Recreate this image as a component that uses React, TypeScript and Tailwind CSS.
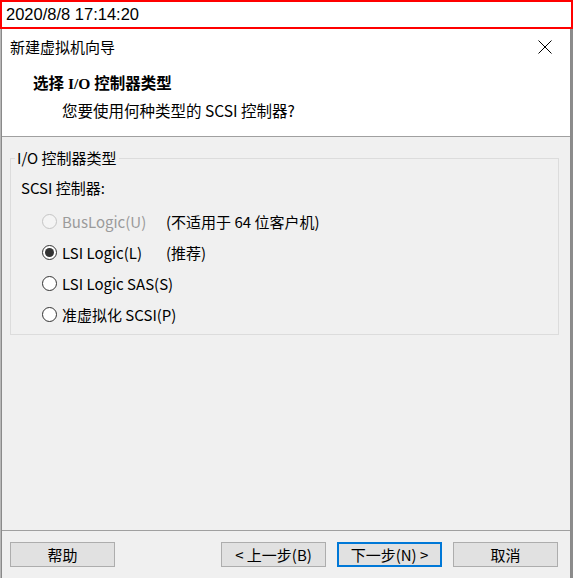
import type { ReactNode } from 'react'

const UI_FONT = "font-['Noto_Sans_CJK_SC','Noto_Sans',sans-serif]"

type Option = { label: string; note?: string; checked?: boolean; disabled?: boolean }

const OPTIONS: Option[] = [
  { label: 'BusLogic(U)', note: '(不适用于 64 位客户机)', disabled: true },
  { label: 'LSI Logic(L)', note: '(推荐)', checked: true },
  { label: 'LSI Logic SAS(S)' },
  { label: '准虚拟化 SCSI(P)' },
]

function Radio({ checked, disabled }: { checked?: boolean; disabled?: boolean }) {
  return (
    <span
      className={`flex items-center justify-center w-[15px] h-[15px] rounded-full border shrink-0 ${
        disabled ? 'border-[#c4c4c4] bg-[#f4f4f4]' : 'border-[#333333] bg-white'
      }`}
    >
      {checked && <span className="w-[9px] h-[9px] rounded-full bg-[#333333]" />}
    </span>
  )
}

function Button({ children, primary }: { children: ReactNode; primary?: boolean }) {
  return (
    <button
      className={`w-[105px] h-[25px] bg-[#e1e1e1] text-[15px] leading-none text-black flex items-center justify-center ${
        primary ? 'border-2 border-[#0078d7]' : 'border border-[#adadad]'
      }`}
    >
      {children}
    </button>
  )
}

export default function App() {
  return (
    <div className={`w-[573px] h-[578px] flex flex-col overflow-hidden bg-[#f0f0f0] ${UI_FONT}`}>
      {/* timestamp strip */}
      <div className="h-[29px] shrink-0 border-2 border-[#ff0000] bg-white flex items-center pl-[4px] font-['Liberation_Sans',sans-serif] text-[16.5px] text-black">
        2020/8/8 17:14:20
      </div>

      <div className="flex-1 flex min-h-0">
        <div className="w-[1px] bg-[#b8b8b8]" />

        <div className="flex-1 flex flex-col border-l border-r border-[#8a8a8a] bg-[#f0f0f0]">
          {/* title bar + header */}
          <div className="bg-white border-b border-[#a0a0a0]">
            <div className="h-[36px] flex items-center justify-between pl-[8px] pr-[18px]">
              <span className="text-[15px] text-black">新建虚拟机向导</span>
              <svg width="14" height="14" viewBox="0 0 14 14" className="text-black">
                <path d="M0.5 0.5 L13.5 13.5 M13.5 0.5 L0.5 13.5" stroke="currentColor" strokeWidth="1" fill="none" />
              </svg>
            </div>
            <div className="pl-[31px] pt-[9px] pb-[16px]">
              <div className="text-[15.5px] leading-[20px] font-bold text-black font-['Liberation_Serif','Noto_Sans_CJK_SC',serif]">
                选择 I/O 控制器类型
              </div>
              <div className="mt-[6px] pl-[29px] text-[15.5px] leading-[20px] text-black">
                您要使用何种类型的 SCSI 控制器?
              </div>
            </div>
          </div>

          {/* body */}
          <div className="flex-1 pl-[8px] pr-[11px] pt-[11px]">
            <fieldset className="border border-[#dcdcdc] pl-[10px] pb-[4px]">
              <legend className="ml-[-6px] px-[2px] text-[15px] leading-[20px] text-black">I/O 控制器类型</legend>
              <div className="mt-[10px] text-[15px] leading-[20px] text-black">SCSI 控制器:</div>
              <div className="mt-[8px] flex flex-col">
                {OPTIONS.map((o) => (
                  <div key={o.label} className="h-[31px] flex items-center pl-[21px]">
                    <Radio checked={o.checked} disabled={o.disabled} />
                    <span
                      className={`ml-[5px] w-[104px] text-[15px] leading-[20px] whitespace-nowrap ${
                        o.disabled ? 'text-[#9b9b9b]' : 'text-black'
                      }`}
                    >
                      {o.label}
                    </span>
                    {o.note && <span className="text-[15px] leading-[20px] text-black">{o.note}</span>}
                  </div>
                ))}
              </div>
            </fieldset>
          </div>

          {/* footer */}
          <div className="h-[48px] shrink-0 border-t border-[#a0a0a0] flex items-start pt-[11px] pl-[8px] pr-[12px]">
            <Button>帮助</Button>
            <div className="flex-1" />
            <div className="flex gap-[11px]">
              <Button>&lt; 上一步(B)</Button>
              <Button primary>下一步(N) &gt;</Button>
              <Button>取消</Button>
            </div>
          </div>
        </div>

        <div className="w-[2px] bg-[#8c8c8c]" />
      </div>
    </div>
  )
}
